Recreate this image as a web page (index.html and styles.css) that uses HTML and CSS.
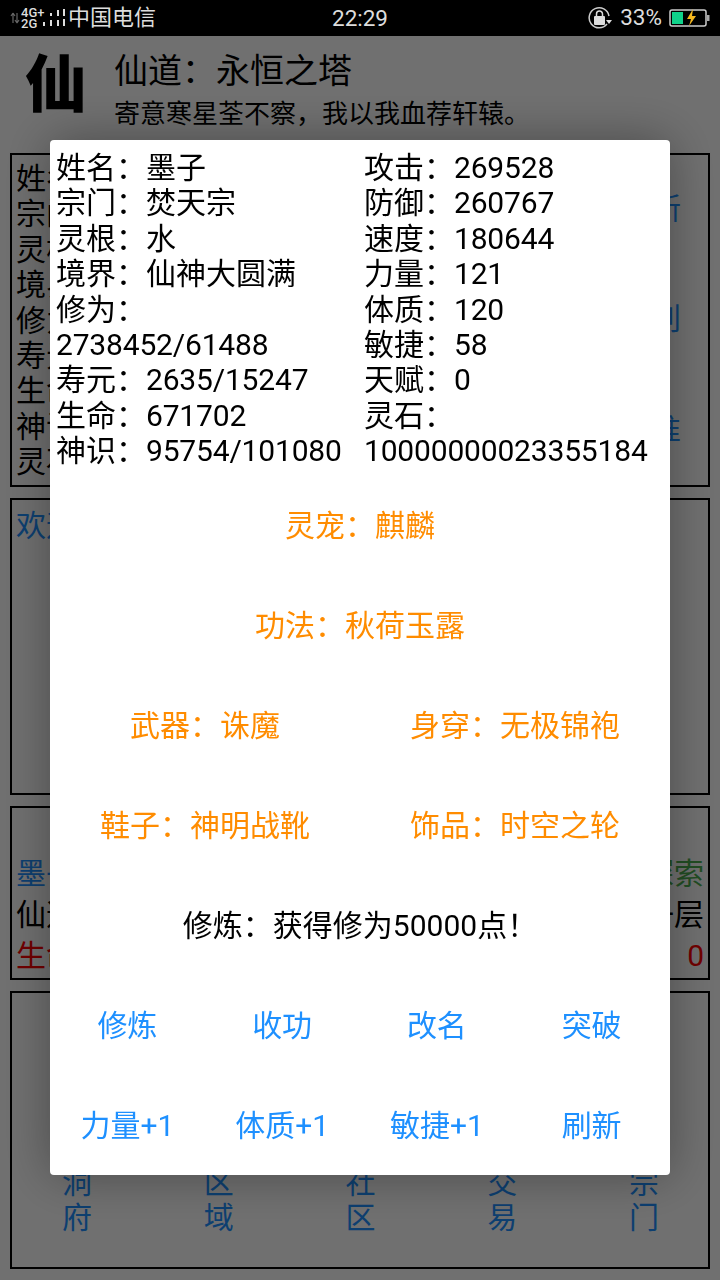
FILE: index.html
```html
<!DOCTYPE html>
<html lang="zh">
<head>
<meta charset="utf-8">
<title>仙道</title>
<link rel="stylesheet" href="styles.css">
</head>
<body>
<div class="status">
  <div class="status-left">
    <svg class="arrows" width="10" height="12" viewBox="0 0 10 12"><path d="M3 1v10M3 1L1 4M3 1l2 3M7 11V1M7 11L5 8M7 11l2-3" stroke="#666" stroke-width="1.2" fill="none"/></svg>
    <div class="net"><span>4G+</span><span>2G</span></div>
    <svg class="bars" width="24" height="20" viewBox="0 0 24 20"><path d="M2 14v4M9 5v3M9 12v6M16 2v6M16 12v6M22 1v7M22 11v7" stroke="#ddd" stroke-width="2" fill="none"/></svg>
    <span class="carrier">中国电信</span>
  </div>
  <div class="time">22:29</div>
  <div class="status-right">
    <svg width="26" height="24" viewBox="0 0 26 24"><path d="M20 18A10 10 0 1 1 22 10" stroke="#ccc" stroke-width="1.5" fill="none"/><path d="M19 14h6l-3 4z" fill="#ddd"/><rect x="7" y="10" width="11" height="9" rx="1" fill="#ddd"/><path d="M9.500 10V8a3 3 0 0 1 6 0v2" stroke="#ddd" stroke-width="1.500" fill="none"/></svg>
    <span class="pct">33%</span>
    <svg width="41" height="20" viewBox="0 0 41 20"><rect x="1" y="2" width="36" height="16" rx="2" stroke="#ccc" stroke-width="1.500" fill="none"/><rect x="3" y="4" width="11" height="12" fill="#0fd28a"/><rect x="38" y="7" width="2.500" height="6" fill="#aaa"/><path d="M20 18l2-7h-4l6-10-1 7h4z" fill="#f5b81f"/></svg>
  </div>
</div>

<main class="page">
  <header class="head">
    <div class="logo">仙</div>
    <div class="head-text">
      <div class="title">仙道：永恒之塔</div>
      <div class="motto">寄意寒星荃不察，我以我血荐轩辕。</div>
    </div>
  </header>

  <section class="panel panel-info">
    <div class="info-lines">
      <div>姓名：墨子</div><div>宗门：焚天宗</div><div>灵根：水</div><div>境界：仙神大圆满</div><div>修为：</div><div>寿元：2635</div><div>生命：671702</div><div>神识：95754</div><div>灵石：1000</div>
    </div>
    <div class="info-side">
      <span>刷新</span><span>特别</span><span>标准</span>
    </div>
  </section>

  <section class="panel panel-welcome"><span class="blue">欢迎来到仙道</span></section>

  <section class="panel panel-tower">
    <div class="tower-row"><span class="blue">墨子</span><span class="green">探索</span></div>
    <div class="tower-row"><span>仙道</span><span>一层</span></div>
    <div class="tower-row"><span class="red">生命</span><span class="red">0</span></div>
  </section>

  <nav class="panel panel-nav">
    <span class="nav-item">洞<br>府</span>
    <span class="nav-item">区<br>域</span>
    <span class="nav-item">社<br>区</span>
    <span class="nav-item">交<br>易</span>
    <span class="nav-item">宗<br>门</span>
  </nav>
</main>

<div class="scrim"></div>

<div class="dialog">
  <div class="stats">
    <div class="stat-col">
      <div>姓名：墨子</div>
      <div>宗门：焚天宗</div>
      <div>灵根：水</div>
      <div>境界：仙神大圆满</div>
      <div>修为：<br><span class="num">2738452/61488</span></div>
      <div>寿元：<span class="num">2635/15247</span></div>
      <div>生命：<span class="num">671702</span></div>
      <div>神识：<span class="num">95754/101080</span></div>
    </div>
    <div class="stat-col">
      <div>攻击：<span class="num">269528</span></div>
      <div>防御：<span class="num">260767</span></div>
      <div>速度：<span class="num">180644</span></div>
      <div>力量：<span class="num">121</span></div>
      <div>体质：<span class="num">120</span></div>
      <div>敏捷：<span class="num">58</span></div>
      <div>天赋：<span class="num">0</span></div>
      <div>灵石：<br><span class="num">10000000023355184</span></div>
    </div>
  </div>
  <div class="row orange"><span>灵宠：麒麟</span></div>
  <div class="row orange"><span>功法：秋荷玉露</span></div>
  <div class="row orange"><span>武器：诛魔</span><span>身穿：无极锦袍</span></div>
  <div class="row orange"><span>鞋子：神明战靴</span><span>饰品：时空之轮</span></div>
  <div class="row"><span>修炼：获得修为50000点！</span></div>
  <div class="row action"><span>修炼</span><span>收功</span><span>改名</span><span>突破</span></div>
  <div class="row action"><span>力量+1</span><span>体质+1</span><span>敏捷+1</span><span>刷新</span></div>
</div>
</body>
</html>
```
FILE: styles.css
```css
* { box-sizing: border-box; }
html, body { margin: 0; height: 1280px; overflow: hidden; }
body {
  background: #fff;
  color: #000;
  font-family: Roboto, "Noto Sans CJK SC", sans-serif;
  font-size: 30px;
  line-height: 35.4px;
}
.status {
  height: 36px;
  background: #000;
  color: #ddd;
  display: grid;
  grid-template-columns: 1fr auto 1fr;
  align-items: center;
  padding: 0 10px;
  position: relative;
  z-index: 3;
}
.status-left { display: flex; align-items: center; }
.arrows { margin-right: 1px; }
.net { display: flex; flex-direction: column; font-size: 13px; line-height: 11px; font-weight: 500; width: 22px; }
.bars { margin-left: -1px; }
.carrier { font-size: 22px; line-height: 36px; margin-left: 2px; }
.time { font-size: 22.500px; line-height: 36px; }
.status-right { display: flex; align-items: center; justify-content: flex-end; }
.pct { font-size: 22.500px; margin: 0 7px 0 7px; }
.page { padding: 0 10px; }
.head { height: 117px; display: flex; padding: 15px 0 0 15px; }
.logo {
  width: 64px;
  height: 70px;
  font-size: 62px;
  line-height: 70px;
  font-weight: 900;
}
.head-text { margin-left: 26px; }
.title { font-size: 34px; line-height: 40px; margin-left: -1px; }
.motto { font-size: 26px; line-height: 46px; margin-left: -1px; white-space: nowrap; }
.panel { border: 2px solid #000; margin-bottom: 11px; }
.panel-info { height: 334px; padding: 6px 4px; display: flex; justify-content: space-between; }
.info-lines { white-space: nowrap; }
.info-side {
  display: flex;
  flex-direction: column;
  align-items: flex-end;
  color: #1e90ff;
  padding: 30px 0 0 0;
  margin-right: 10px;
  transform: translateX(-13px);
  gap: 75px;
}
.panel-welcome { height: 297px; padding: 8px 4px; }
.blue { color: #1e90ff; }
.green { color: #4caf50; }
.red { color: #f00; }
.panel-tower { height: 174px; padding: 45px 4px 0; }
.tower-row { display: flex; justify-content: space-between; line-height: 41px; }
.panel-nav {
  height: 278px;
  margin-bottom: 0;
  padding: 0 49px 32px 50px;
  display: flex;
  justify-content: space-between;
  align-items: flex-end;
  color: #1e90ff;
}
.nav-item { width: 30px; text-align: center; line-height: 34.500px; }
.scrim { position: fixed; inset: 36px 0 0 0; background: rgba(0, 0, 0, .56); z-index: 1; }
.dialog {
  position: fixed;
  left: 50px;
  top: 140px;
  width: 620px;
  height: 1035px;
  background: #fff;
  border-radius: 4px;
  box-shadow: 0 0 50px rgba(0, 0, 0, .35);
  z-index: 2;
}
.stats {
  height: 335px;
  padding: 10px 6px 0;
  display: grid;
  grid-template-columns: 308px 1fr;
  white-space: nowrap;
}
.num { letter-spacing: -.18px; }
.row { height: 100px; padding-top: 2px; display: flex; align-items: center; justify-content: center; }
.row > span { flex: 1; text-align: center; }
.orange { color: #ff8c00; }
.action { color: #1e90ff; padding-right: 1px; }
```
